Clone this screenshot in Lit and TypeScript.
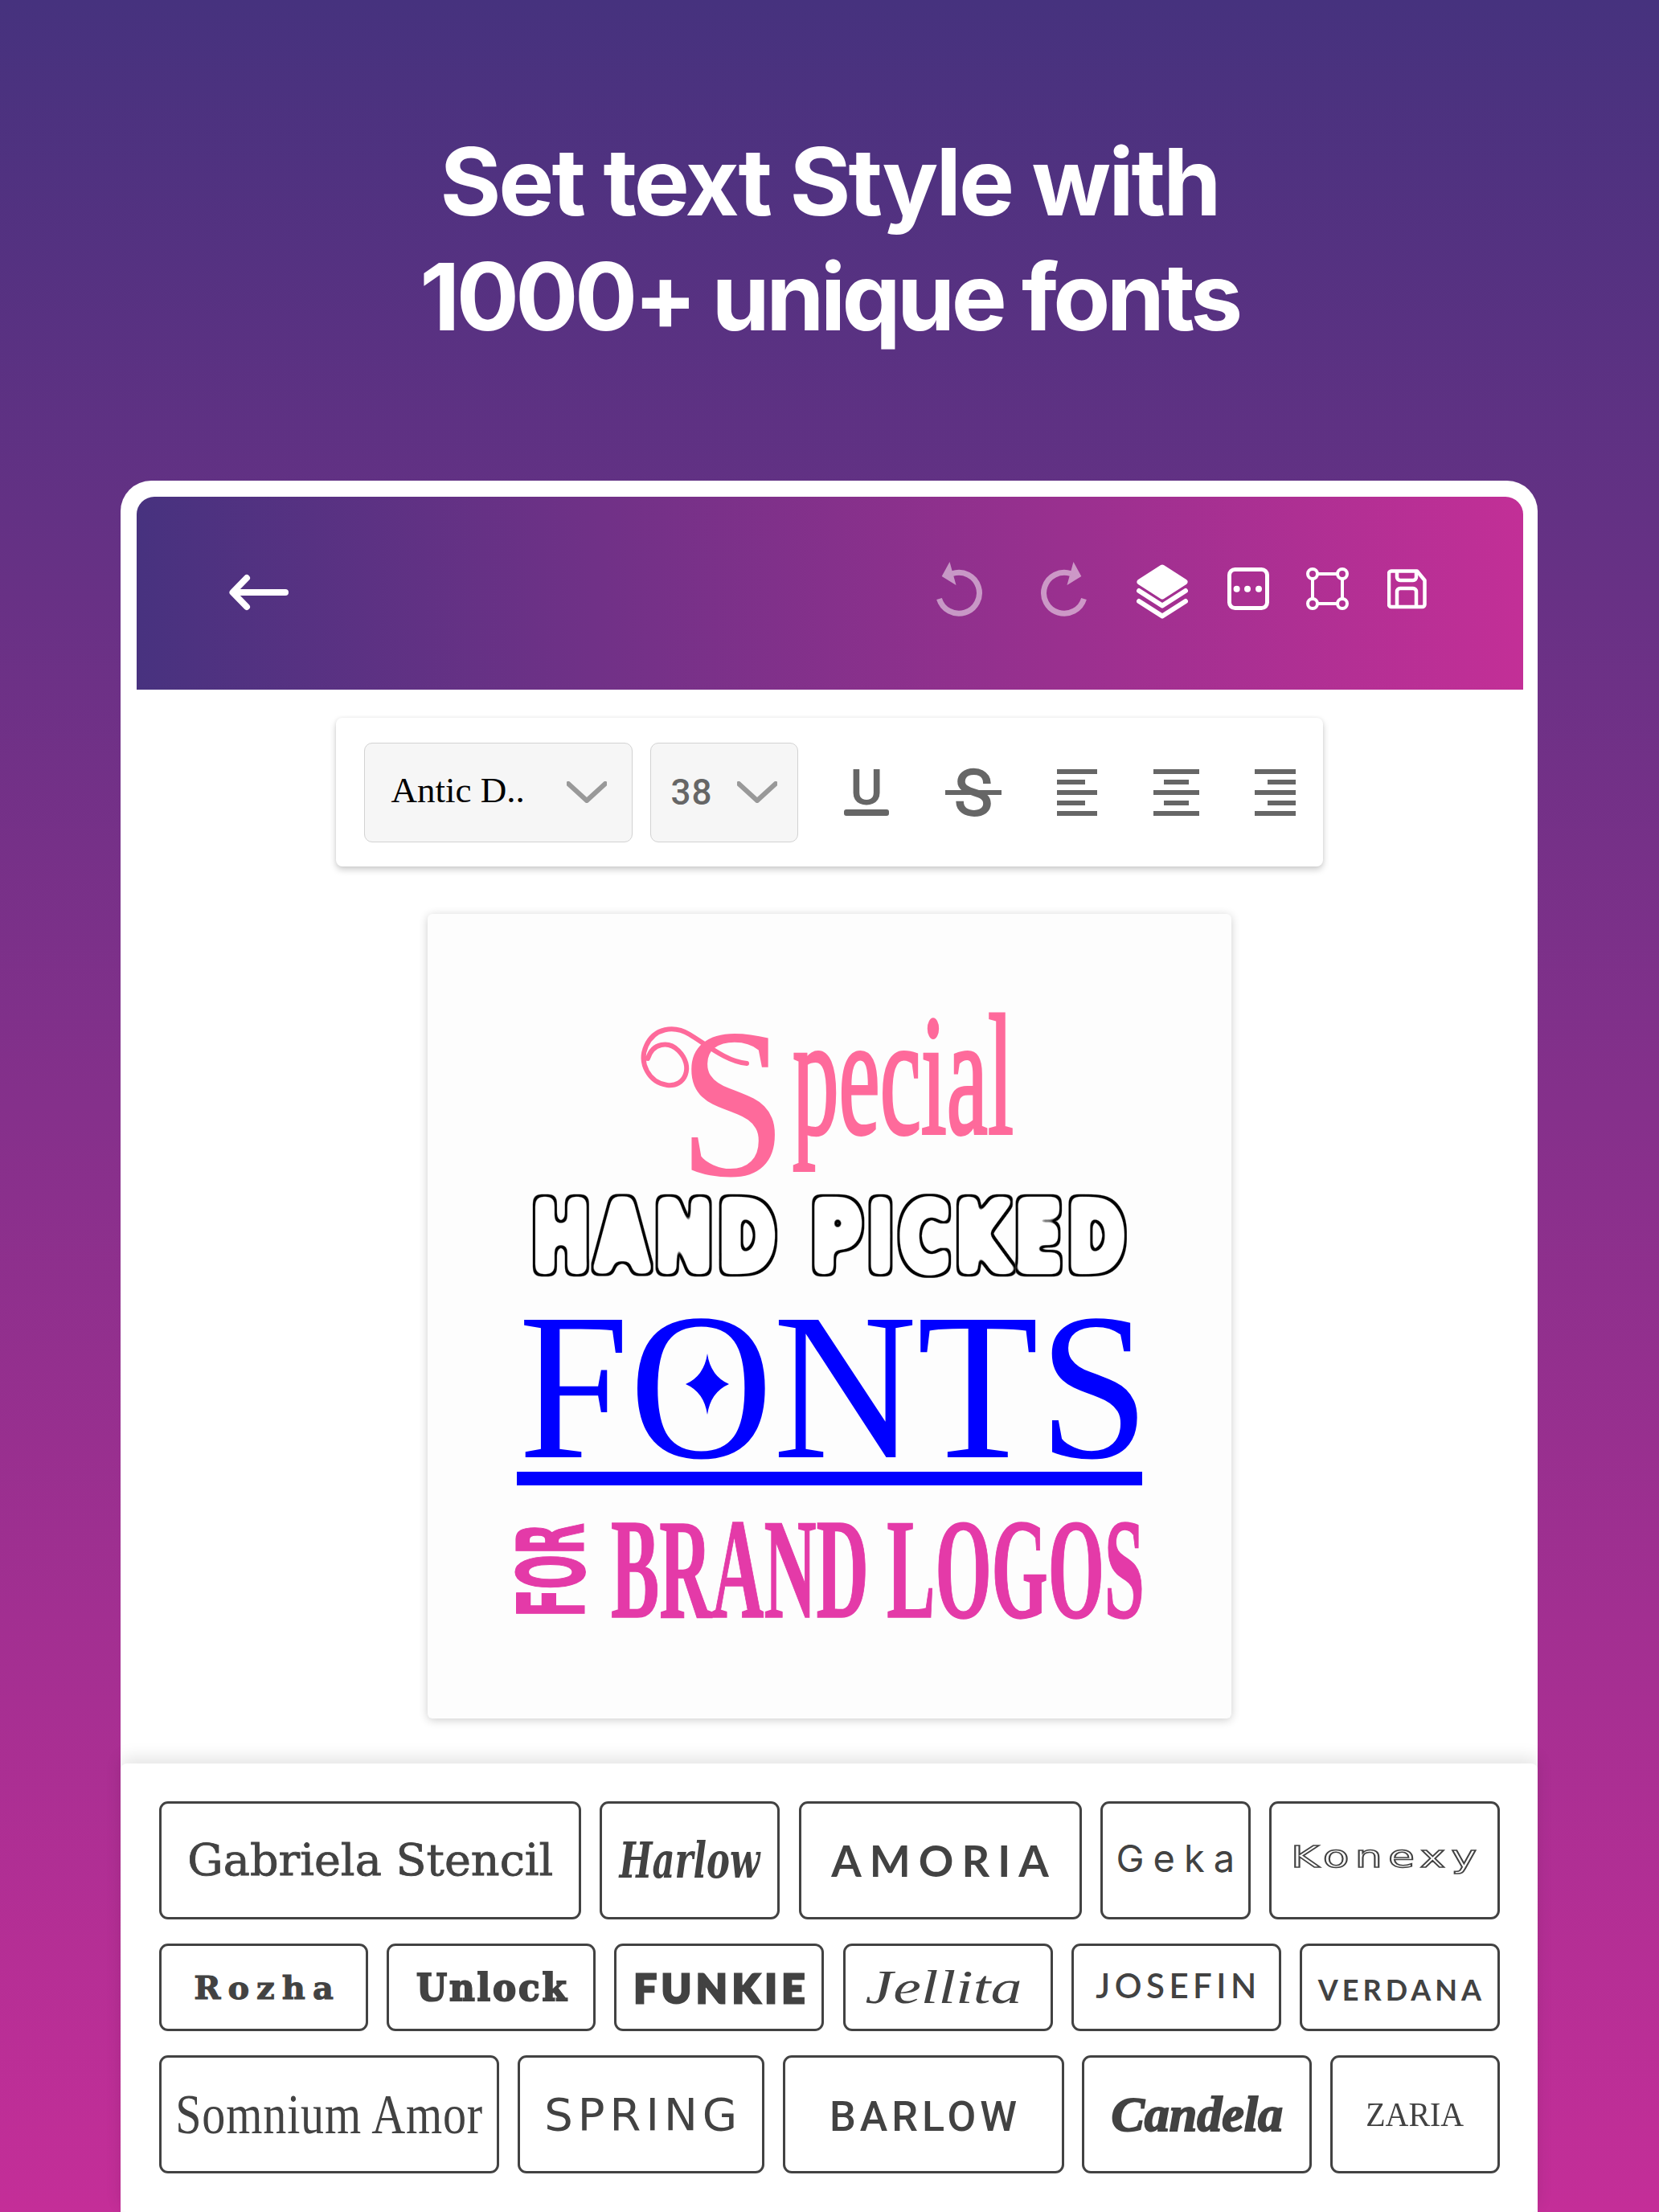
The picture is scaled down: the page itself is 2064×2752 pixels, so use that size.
import { LitElement, html, svg, css } from "lit";
import { customElement } from "lit/decorators.js";

interface Chip { key: string; label: string; w: number; }

const ROWS: { cls: string; chips: Chip[] }[] = [
  { cls: "tall", chips: [
    { key: "gabriela", label: "Gabriela Stencil", w: 525 },
    { key: "harlow", label: "Harlow", w: 224 },
    { key: "amoria", label: "AMORIA", w: 352 },
    { key: "geka", label: "Geka", w: 187 },
    { key: "konexy", label: "Konexy", w: 287 },
  ]},
  { cls: "short", chips: [
    { key: "rozha", label: "Rozha", w: 260 },
    { key: "unlock", label: "Unlock", w: 260 },
    { key: "funkie", label: "FUNKIE", w: 261 },
    { key: "jellita", label: "Jellita", w: 261 },
    { key: "josefin", label: "JOSEFIN", w: 261 },
    { key: "verdana", label: "VERDANA", w: 249 },
  ]},
  { cls: "tall", chips: [
    { key: "somnium", label: "Somnium Amor", w: 423 },
    { key: "spring", label: "SPRING", w: 307 },
    { key: "barlow", label: "BARLOW", w: 350 },
    { key: "candela", label: "Candela", w: 286 },
    { key: "zaria", label: "ZARIA", w: 211 },
  ]},
];

@customElement("app-root")
export class AppRoot extends LitElement {
  static styles = css`
    :host {
      display: block; width: 2064px; height: 2752px; overflow: hidden;
      background: linear-gradient(180deg, #46327e 0%, #c42e98 100%);
      font-family: "Liberation Sans", sans-serif;
    }
    .title {
      margin: 0; padding-top: 155px; text-align: center; color: #fff;
      font: 700 116px/143px Inter, sans-serif;
    }
    .l1 { display: block; letter-spacing: -3px; }
    .l2 { display: block; letter-spacing: -4.600px; }
    .frame {
      margin: 157px 151px 0 150px; height: 2154px; background: #fff;
      border-radius: 38px 38px 0 0; display: flex; flex-direction: column; align-items: center;
    }
    .head {
      align-self: stretch; flex: none; margin: 20px 18px 0 20px; height: 240px; box-sizing: border-box;
      padding: 80px 0 0 115px; display: flex; align-items: flex-start;
      background: linear-gradient(93deg, #47327f 0%, #c32f97 100%);
      border-radius: 22px 22px 0 0;
    }
    .head svg { display: block; height: 72px; flex: none; }
    .back { width: 74px; margin-right: 805px; }
    .i-undo { width: 60px; }
    .i-redo { width: 60px; margin-left: 69px; }
    .i-layers { width: 64px; margin-left: 61px; }
    .i-dots { width: 52px; margin-left: 49px; }
    .i-select { width: 53px; margin-left: 46px; }
    .i-save { width: 49px; margin-left: 48px; }
    .tools {
      margin-top: 35px; flex: none; width: 1228px; height: 185px; box-sizing: border-box; padding: 0 34px 0 35px;
      display: flex; align-items: center; background: #fff; border-radius: 8px;
      box-shadow: 0 4px 8px rgba(0, 0, 0, .2), 0 0 4px rgba(0, 0, 0, .06);
    }
    .select {
      height: 124px; flex: none; box-sizing: border-box; background: #f6f6f6; border: 1.5px solid #d2d2d2;
      border-radius: 10px; display: flex; align-items: center;
    }
    .select svg { display: block; width: 50px; height: 27px; flex: none; }
    .s-font { width: 334px; padding-left: 33px; margin-right: 22px; color: #000; font: 45px "Liberation Serif", serif; }
    .s-font span { width: 218px; white-space: nowrap; padding-bottom: 6px; }
    .s-size { width: 184px; padding-left: 25px; color: #666; font: 500 44px Roboto, sans-serif; letter-spacing: 1px; }
    .s-size span { width: 82px; }
    .fmt { display: block; height: 58px; flex: none; overflow: visible; }
    .f-u { width: 56px; margin-left: 57px; }
    .f-s { width: 70px; margin-left: 70px; }
    .f-l { width: 50px; margin-left: 69px; }
    .f-c { width: 57px; margin-left: 70px; }
    .f-r { width: 51px; margin-left: 69px; }
    .fmt text { font-family: Roboto, sans-serif; fill: #666; stroke: #666; stroke-width: 2px; }
    .canvas {
      margin-top: 59px; width: 1000px; height: 1001px; flex: none; background: #fdfdfd; border-radius: 6px;
      box-shadow: 0 2px 12px rgba(0, 0, 0, .2);
    }
    .canvas svg { display: block; width: 1000px; height: 1001px; }
    .a-special { font-family: "Liberation Serif", serif; fill: #fe6a9b; stroke: #fe6a9b; stroke-width: 4px; }
    .a-cap { font-family: "Liberation Serif", serif; fill: #fe6a9b; }
    .a-swash { fill: none; stroke: #fe6a9b; stroke-width: 6px; stroke-linecap: round; }
    .a-hand {
      font-family: "DejaVu Sans", sans-serif; font-weight: 700; fill: #fff; stroke: #fff; stroke-width: 9px;
      stroke-linejoin: round; letter-spacing: 10px;
    }
    .a-fonts { font-family: "Liberation Serif", serif; fill: #0000ff; }
    .a-for { font-family: "DejaVu Sans", sans-serif; font-weight: 700; fill: #e43aa8; stroke: #e43aa8; stroke-width: 2px; }
    .a-brand { font-family: "Liberation Serif", serif; font-weight: 700; fill: #e43aa8; stroke: #e43aa8; stroke-width: 1.500px; }
    .panel {
      margin-top: 56px; align-self: stretch; flex: 1; box-sizing: border-box; padding: 47px 47px 0 48px;
      background: #fff; border-radius: 8px; display: flex; flex-direction: column; gap: 30px;
      box-shadow: 0 -8px 20px rgba(0, 0, 0, .1);
    }
    .row { display: flex; justify-content: space-between; flex: none; }
    .tall { height: 147px; }
    .short { height: 109px; }
    .chip {
      box-sizing: border-box; border: 3px solid #424242; border-radius: 11px; display: flex;
      align-items: center; justify-content: center; overflow: hidden; color: #424242; white-space: nowrap;
    }
    .t { display: block; flex: none; }
    .t-gabriela { font: 54px "DejaVu Serif", serif; -webkit-text-stroke: .8px #424242; transform: scaleX(1.03); }
    .t-harlow { font: italic 700 62px "DejaVu Serif", serif; transform: scaleX(.7); }
    .t-amoria { font: 700 54px Lato, sans-serif; letter-spacing: 10px; margin-right: -10px; }
    .t-geka { font: 400 47px Inter, sans-serif; letter-spacing: 11px; margin-right: -11px; padding-bottom: 6px; }
    .t-konexy {
      font: 37px "DejaVu Sans", sans-serif; color: #fff; -webkit-text-stroke: 1.500px #424242;
      letter-spacing: 5px; margin-right: -5px; padding-bottom: 8px; transform: scaleX(1.45);
    }
    .t-rozha { font: 700 40px "DejaVu Serif", serif; -webkit-text-stroke: 1px #424242; letter-spacing: 9px; margin-right: -9px; }
    .t-unlock { font: 900 46px "DejaVu Serif", serif; -webkit-text-stroke: 2px #424242; letter-spacing: 3px; margin-right: -3px; transform: scaleX(.95); }
    .t-funkie { font: 900 50px Lato, sans-serif; -webkit-text-stroke: 3px #424242; letter-spacing: 6px; margin-right: -6px; }
    .t-jellita { font: italic 60px "Liberation Serif", serif; transform: scaleX(1.3); margin-right: 10px; }
    .t-josefin { font: 600 42px Lato, sans-serif; letter-spacing: 5.500px; margin-right: -5.500px; padding-bottom: 6px; }
    .t-verdana { font: 700 36px Lato, sans-serif; letter-spacing: 5px; margin-right: -5px; padding-top: 4px; }
    .t-somnium { font: 70px "Liberation Serif", serif; transform: scaleX(.83); letter-spacing: 1px; }
    .t-spring { font: 56px "DejaVu Sans", sans-serif; letter-spacing: 6px; margin-right: -6px; }
    .t-barlow { font: 500 52px Roboto, sans-serif; letter-spacing: 5px; margin-right: -5px; padding-top: 6px; }
    .t-candela { font: italic 700 62px "Liberation Serif", serif; -webkit-text-stroke: 2px #424242; }
    .t-zaria { font: 42px "Liberation Serif", serif; transform: scaleX(.95); }
  `;

  private chevron() {
    return html`<svg viewBox="0 0 50 27"><path d="M2 3L25 24L48 3" fill="none" stroke="#999" stroke-width="6" stroke-linecap="round" stroke-linejoin="round"/></svg>`;
  }

  private lines(x: number[]) {
    return [0, 1, 2, 3, 4].map((i) => {
      const [a, b] = i % 2 === 0 ? [x[0], x[1]] : [x[2], x[3]];
      return svg`<rect x=${a} y=${i * 13} width=${b - a} height="6" fill="#666"/>`;
    });
  }

  render() {
    return html`
      <h1 class="title"><span class="l1">Set text Style with</span><span class="l2">1000+ unique fonts</span></h1>
      <div class="frame">
        <div class="head">
          <svg class="back" viewBox="0 0 74 72" fill="none" stroke="#fff" stroke-width="8" stroke-linecap="round" stroke-linejoin="round"><path d="M5 39H70M22 21L4.500 39L22 57"/></svg>
          <svg class="i-undo" viewBox="0 0 60 72"><g opacity=".5"><path d="M4.500 47A25.500 25.500 0 1 0 21 15.500" fill="none" stroke="#fff" stroke-width="7"/><path d="M17.500 1L7.700 19L25.500 30Z" fill="#fff"/></g></svg>
          <svg class="i-redo" viewBox="0 0 60 72"><g opacity=".5" transform="translate(60,0) scale(-1,1)"><path d="M4.500 47A25.500 25.500 0 1 0 21 15.500" fill="none" stroke="#fff" stroke-width="7"/><path d="M17.500 1L7.700 19L25.500 30Z" fill="#fff"/></g></svg>
          <svg class="i-layers" viewBox="0 0 64 72"><path d="M32 8L60 26L32 44L4 26Z" fill="#fff" stroke="#fff" stroke-width="7" stroke-linejoin="round"/><path d="M3 37L32 55.500L61 37M3 50L32 68.500L61 50" fill="none" stroke="#fff" stroke-width="6" stroke-linecap="round" stroke-linejoin="round"/></svg>
          <svg class="i-dots" viewBox="0 0 52 72"><rect x="2.500" y="10.500" width="47" height="48" rx="7" fill="none" stroke="#fff" stroke-width="5"/><circle cx="11.600" cy="34.700" r="4" fill="#fff"/><circle cx="25" cy="34.700" r="4" fill="#fff"/><circle cx="39" cy="34.700" r="4" fill="#fff"/></svg>
          <svg class="i-select" viewBox="0 0 53 72" fill="none" stroke="#fff" stroke-width="4"><path d="M14 16H39M14 53H39M8 22V47M45 22V47"/><circle cx="8" cy="16" r="6"/><circle cx="45" cy="16" r="6"/><circle cx="8" cy="53" r="6"/><circle cx="45" cy="53" r="6"/></svg>
          <svg class="i-save" viewBox="0 0 49 72" fill="none" stroke="#fff" stroke-width="4.500" stroke-linejoin="round"><path d="M5 12.500H37L46.500 24V54A3 3 0 0 1 43.500 57H5A3 3 0 0 1 2 54V15.500A3 3 0 0 1 5 12.500Z"/><path d="M12 12.500V20A4 4 0 0 0 16 24H32A4 4 0 0 0 36 20V12.500M12 57V38A4 4 0 0 1 16 34H32A4 4 0 0 1 36 38V57"/></svg>
        </div>

        <div class="tools">
          <div class="select s-font"><span>Antic D..</span>${this.chevron()}</div>
          <div class="select s-size"><span>38</span>${this.chevron()}</div>
          <svg class="fmt f-u" viewBox="0 0 56 58"><text x="28" y="43" font-size="60" text-anchor="middle">U</text><rect x="0" y="50" width="56" height="8" rx="3" fill="#666"/></svg>
          <svg class="fmt f-s" viewBox="0 0 70 58"><text x="35" y="57" font-size="80" text-anchor="middle">S</text><rect x="0" y="26" width="70" height="6" fill="#666"/></svg>
          <svg class="fmt f-l" viewBox="0 0 50 58">${this.lines([0, 50, 0, 35])}</svg>
          <svg class="fmt f-c" viewBox="0 0 57 58">${this.lines([0, 57, 13, 44])}</svg>
          <svg class="fmt f-r" viewBox="0 0 51 58">${this.lines([0, 51, 16, 51])}</svg>
        </div>

        <div class="canvas">
          <svg viewBox="0 0 1000 1001">
            <defs>
              <filter id="outline" x="-5%" y="-15%" width="110%" height="130%" color-interpolation-filters="sRGB">
                <feGaussianBlur in="SourceAlpha" stdDeviation="5"/>
                <feColorMatrix values="0 0 0 0 1  0 0 0 0 1  0 0 0 0 1  0 0 0 10 -4" result="goo"/>
                <feMorphology in="goo" operator="dilate" radius="2.500"/>
                <feColorMatrix values="0 0 0 0 0  0 0 0 0 0  0 0 0 0 0  0 0 0 1 0" result="edge"/>
                <feMerge><feMergeNode in="edge"/><feMergeNode in="goo"/></feMerge>
              </filter>
            </defs>
            <path class="a-swash" d="M274 180C280 160 300 158 312 170C332 190 320 216 298 213C276 210 262 186 272 164C282 142 306 138 326 150C346 162 372 184 397 186"/>
            <text class="a-cap" x="312" y="325" font-size="266" textLength="135" lengthAdjust="spacingAndGlyphs">S</text>
            <text class="a-special" x="454" y="273" font-size="215" textLength="275" lengthAdjust="spacingAndGlyphs">pecial</text>
            <text class="a-hand" x="130" y="443" font-size="118" textLength="745" lengthAdjust="spacingAndGlyphs" filter="url(#outline)">HAND PICKED</text>
            <text class="a-fonts" x="113" y="676" font-size="261" textLength="785" lengthAdjust="spacingAndGlyphs">FONTS</text>
            <path d="M348 547Q352 575 375 585Q352 595 348 623Q344 595 321 585Q344 575 348 547Z" fill="#0000ff"/>
            <rect x="111" y="694" width="778" height="17" fill="#0000ff"/>
            <text class="a-for" transform="translate(194,875) rotate(-90)" x="0" y="0" font-size="114" textLength="117" lengthAdjust="spacingAndGlyphs">FOR</text>
            <text class="a-brand" x="228" y="875" font-size="177" textLength="664" lengthAdjust="spacingAndGlyphs">BRAND LOGOS</text>
          </svg>
        </div>

        <div class="panel">
          ${ROWS.map((r) => html`
            <div class="row ${r.cls}">
              ${r.chips.map((c) => html`<div class="chip" style="width:${c.w}px"><span class="t t-${c.key}">${c.label}</span></div>`)}
            </div>`)}
        </div>
      </div>
    `;
  }
}
